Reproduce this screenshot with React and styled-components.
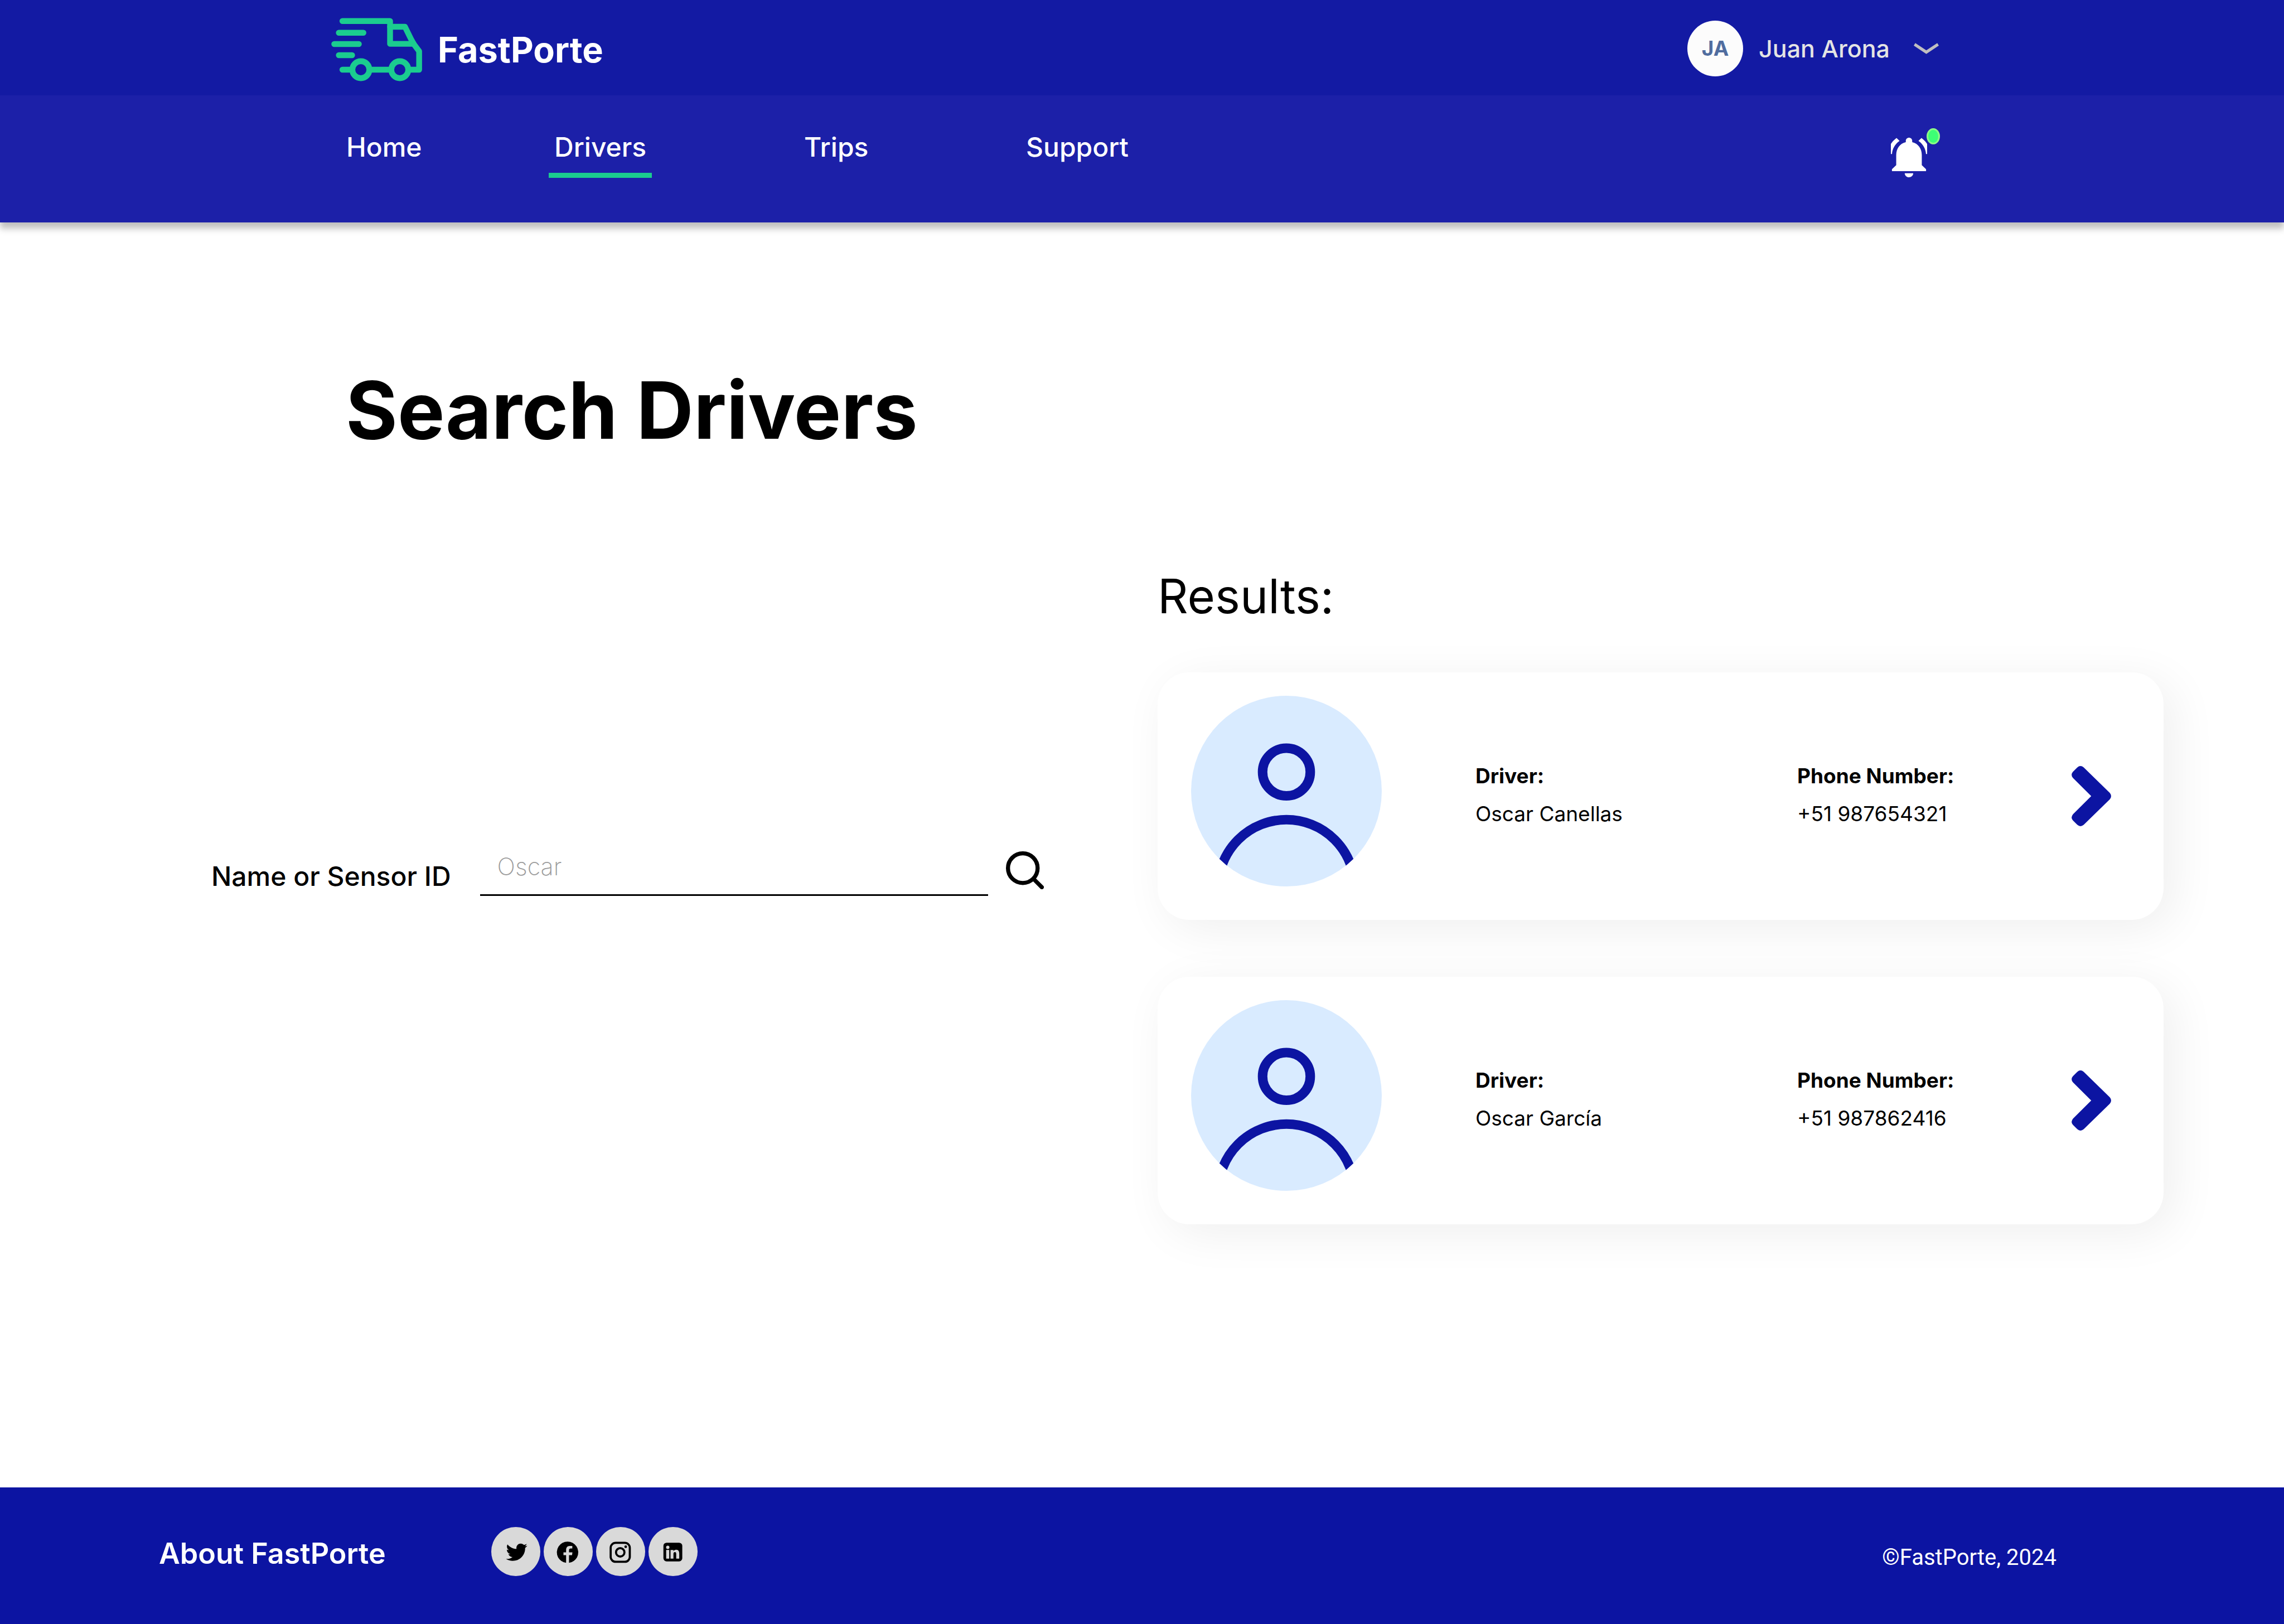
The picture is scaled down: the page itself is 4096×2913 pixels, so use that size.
import React, { useState } from "react";
import styled, { createGlobalStyle } from "styled-components";

const color = {
  brand: "#0c14a2",
  topBar: "#131aa3",
  navBar: "#1c20a8",
  accent: "#1bcc8f",
  page: "#ffffff",
};

const GlobalStyle = createGlobalStyle`
  *, *::before, *::after { box-sizing: border-box; }
  body {
    margin: 0;
    background: ${color.page};
    color: #000;
    font-family: Inter, "Liberation Sans", sans-serif;
  }
  button, input { font: inherit; color: inherit; }
  svg { display: block; }
`;

const Page = styled.div`
  display: flex;
  flex-direction: column;
  min-height: 100vh;
`;

const Header = styled.header`
  position: relative;
  box-shadow: 0 11px 11px rgba(0, 0, 0, 0.25);
`;

const TopBar = styled.div`
  display: flex;
  align-items: center;
  justify-content: space-between;
  height: 171px;
  padding: 3px 619px 0 594px;
  background: ${color.topBar};
`;

const Brand = styled.a`
  display: flex;
  align-items: center;
  gap: 27px;
  padding-top: 4px;
  color: #fff;
  font-size: 63px;
  font-weight: 700;
  line-height: 76px;
  text-decoration: none;
`;

const TruckIcon = styled.svg`
  width: 164px;
  height: 114px;
  fill: none;
  stroke: ${color.accent};
  stroke-width: 14.6;
  stroke-linecap: round;
  stroke-linejoin: round;
`;

const PlainButton = styled.button`
  display: flex;
  padding: 0;
  border: 0;
  background: none;
  cursor: pointer;
`;

const ProfileButton = styled(PlainButton)`
  align-items: center;
  color: #e4e4e4;
  font-size: 43px;
  font-weight: 500;
  line-height: 52px;
`;

const Initials = styled.span`
  display: grid;
  place-items: center;
  width: 100px;
  height: 100px;
  margin-right: 28px;
  border-radius: 50%;
  background: #fcfcfc;
  color: #506d9f;
  font-size: 37px;
  font-weight: 700;
`;

const DownIcon = styled.svg`
  width: 45px;
  height: 20px;
  margin-left: 43px;
  fill: #c0bfc0;
`;

const NavBar = styled.div`
  display: flex;
  align-items: flex-start;
  justify-content: space-between;
  padding: 64px 617px 80px 611px;
  background: ${color.navBar};
`;

const NavLinks = styled.nav`
  display: grid;
  grid-template-columns: 373px 448px 398px auto;
  justify-items: start;
`;

const NavLink = styled.a`
  padding: 0 10px 17px;
  border-bottom: 9px solid ${(p) => (p.$active ? color.accent : "transparent")};
  color: #fff;
  font-size: 48px;
  font-weight: 500;
  line-height: 58px;
  text-decoration: none;
`;

const BellButton = styled(PlainButton)`
  position: relative;
  align-items: flex-end;
  width: 88px;
  height: 88px;
  margin-top: -5px;
`;

const BellIcon = styled.svg`
  width: 65px;
  height: 71px;
  fill: #fff;
`;

const Badge = styled.span`
  position: absolute;
  top: 0;
  right: 0;
  width: 24px;
  height: 29px;
  border: 3px solid #8dff86;
  border-radius: 50%;
  background: #3dff75;
`;

const Main = styled.main`
  flex: 1;
  padding: 250px 216px 200px 379px;
`;

const Title = styled.h1`
  margin: 0 0 197px 241px;
  font-size: 142px;
  font-weight: 700;
  line-height: 172px;
`;

const Columns = styled.div`
  display: grid;
  grid-template-columns: minmax(0, 1493fr) minmax(0, 1804fr);
  gap: 204px;
`;

const SearchForm = styled.form`
  display: flex;
  align-items: flex-start;
  align-self: start;
  margin-top: 509px;
`;

const SearchLabel = styled.label`
  padding-top: 16px;
  margin-right: 52px;
  font-size: 48px;
  font-weight: 500;
  line-height: 58px;
  white-space: nowrap;
`;

const SearchInput = styled.input`
  flex: 1;
  min-width: 0;
  height: 80px;
  padding: 0 31px 24px;
  border: 0;
  border-bottom: 3px solid #000;
  border-radius: 0;
  outline: 0;
  background: transparent;
  font-size: 43px;
  font-weight: 200;
  line-height: 52px;

  &::placeholder {
    color: #9c9c9c;
    opacity: 1;
  }
`;

const SearchButton = styled(PlainButton)`
  margin-left: 32px;
`;

const SearchIcon = styled.svg`
  width: 68px;
  height: 68px;
  fill: none;
  stroke: #000;
  stroke-width: 31;
  stroke-linecap: round;
`;

const ResultsTitle = styled.h2`
  margin: 0 0 84px;
  font-size: 85px;
  font-weight: 400;
  line-height: 104px;
`;

const CardList = styled.div`
  display: grid;
  gap: 102px;
`;

const Card = styled.article`
  display: flex;
  align-items: center;
  padding: 42px 94px 42px 60px;
  border-radius: 57px;
  background: #fff;
  box-shadow: 18px 16px 84px rgba(0, 0, 0, 0.065);
`;

const Portrait = styled.svg`
  width: 342px;
  height: 342px;
  margin: 0 168px 18px 0;
  border-radius: 50%;
  background: #d9ebff;
  fill: none;
  stroke: ${color.brand};
  stroke-width: 6;
`;

const Details = styled.dl`
  display: grid;
  grid-template-columns: 577px auto;
  margin: 0;
  padding-bottom: 4px;
  font-size: 37px;
  line-height: 68px;
`;

const Term = styled.dt`
  font-weight: 700;
`;

const Value = styled.dd`
  margin: 0;
`;

const OpenButton = styled(PlainButton)`
  margin-left: auto;
`;

const NextIcon = styled.svg`
  width: 71px;
  height: 108px;
  fill: ${color.brand};
`;

const Footer = styled.footer`
  display: flex;
  align-items: center;
  height: 245px;
  padding: 0 408px 8px 285px;
  background: ${color.brand};
  color: #fff;
`;

const AboutLink = styled.a`
  margin-right: 189px;
  color: inherit;
  font-size: 52px;
  font-weight: 600;
  line-height: 62px;
  text-decoration: none;
`;

const SocialLinks = styled.div`
  display: flex;
  gap: 6px;
  margin-bottom: 7px;
`;

const SocialLink = styled.a`
  width: 88px;
  height: 88px;
  border-radius: 50%;
  background: #d9d9d9;
  color: #000;
`;

const Copyright = styled.small`
  margin: 14px 0 0 auto;
  font-family: Roboto, "Liberation Sans", sans-serif;
  font-size: 40px;
  line-height: 48px;
`;

const NAV = ["Home", "Drivers", "Trips", "Support"];

const DRIVERS = [
  { name: "Oscar Canellas", phone: "+51 987654321" },
  { name: "Oscar García", phone: "+51 987862416" },
];

function Truck() {
  return (
    <TruckIcon viewBox="835.5 46 230 160" aria-hidden="true">
      <path d="M863.5 54H983.5V111.5H1043" />
      <path d="M983.5 68.5H1021L1036.5 100L1043.5 112.5L1056.7 130V176.5H1033" />
      <path d="M854.5 83.5H916.5M843 112H905M854.5 140H888M863.5 176.5H885M934 176.5H984" />
      <circle cx="910" cy="176.5" r="21.4" />
      <circle cx="1008" cy="176.5" r="21.4" />
    </TruckIcon>
  );
}

const SOCIAL = [
  {
    name: "Twitter",
    box: "0 36 372 372",
    art: (
      <path
        transform="translate(112 146.5) scale(.315)"
        d="M459.37 151.716c.325 4.548.325 9.097.325 13.645 0 138.72-105.583 298.558-298.558 298.558-59.452 0-114.68-17.219-161.137-47.106 8.447.974 16.568 1.299 25.34 1.299 49.055 0 94.213-16.568 130.274-44.832-46.132-.975-84.792-31.188-98.112-72.772 6.498.974 12.995 1.624 19.818 1.624 9.421 0 18.843-1.3 27.614-3.573-48.081-9.747-84.143-51.98-84.143-102.985v-1.299c13.969 7.797 30.214 12.67 47.431 13.319-28.264-18.843-46.781-51.005-46.781-87.391 0-19.492 5.197-37.36 14.294-52.954 51.655 63.675 129.3 105.258 216.365 109.807-1.624-7.797-2.599-15.918-2.599-24.04 0-57.828 46.782-104.934 104.934-104.934 30.213 0 57.502 12.67 76.67 33.137 23.715-4.548 46.456-13.32 66.599-25.34-7.798 24.366-24.366 44.833-46.132 57.827 21.117-2.273 41.584-8.122 60.426-16.243-14.292 20.791-32.161 39.308-52.628 54.253z"
      />
    ),
  },
  {
    name: "Facebook",
    box: "394 36 372 372",
    art: (
      <path d="M564 308A81 81 0 1 1 586 308V249H609L612 228H586V212C586 203 591 199 600 199H611V180H593C574 180 564 191 564 210V228H544V249H564Z" />
    ),
  },
  {
    name: "Instagram",
    box: "789 36 372 372",
    art: (
      <>
        <rect x="899.5" y="156" width="145" height="144" rx="38" fill="none" stroke="currentColor" strokeWidth="16" />
        <circle cx="972" cy="228" r="32" fill="none" stroke="currentColor" strokeWidth="16" />
        <circle cx="1013.5" cy="186" r="10" />
      </>
    ),
  },
  {
    name: "LinkedIn",
    box: "1183 36 372 372",
    art: (
      <>
        <rect x="1296" y="155" width="143" height="142" rx="24" />
        <g fill="#d9d9d9">
          <circle cx="1329" cy="190" r="12.5" />
          <rect x="1317" y="210" width="23" height="66" />
          <path d="M1350 210H1372V219C1377 212 1384 208 1393 208C1410 208 1416 220 1416 239V276H1393V240C1393 231 1390 226 1383 226C1376 226 1372 231 1372 240V276H1350Z" />
        </g>
      </>
    ),
  },
];

function DriverCard({ driver }) {
  return (
    <Card>
      <Portrait viewBox="0 0 120 120" aria-hidden="true">
        <circle cx="60" cy="48" r="15" />
        <circle cx="60" cy="121" r="43" />
      </Portrait>
      <Details>
        <Term>Driver:</Term>
        <Term>Phone Number:</Term>
        <Value>{driver.name}</Value>
        <Value>{driver.phone}</Value>
      </Details>
      <OpenButton type="button" aria-label={`Open ${driver.name}`}>
        <NextIcon viewBox="72 66 300 456">
          <path d="M116 76Q139 56 164 76L362 270Q382 294 362 318L164 512Q139 532 116 512L82 478Q62 456 84 430L221 294L84 158Q62 132 82 110Z" />
        </NextIcon>
      </OpenButton>
    </Card>
  );
}

export default function App() {
  const [query, setQuery] = useState("");
  return (
    <Page>
      <GlobalStyle />
      <Header>
        <TopBar>
          <Brand href="#">
            <Truck />
            FastPorte
          </Brand>
          <ProfileButton type="button">
            <Initials>JA</Initials>
            Juan Arona
            <DownIcon viewBox="0 0 64 28" aria-hidden="true">
              <path d="M4 0L32 18.5L60 0L64 6.5L32 28L0 6.5Z" />
            </DownIcon>
          </ProfileButton>
        </TopBar>
        <NavBar>
          <NavLinks>
            {NAV.map((item) => (
              <NavLink key={item} href="#" $active={item === "Drivers"}>
                {item}
              </NavLink>
            ))}
          </NavLinks>
          <BellButton type="button" aria-label="Notifications">
            <BellIcon viewBox="3.5 2.5 17 19.5" preserveAspectRatio="none">
              <path d="M7.58 4.08L6.15 2.65C3.75 4.48 2.17 7.3 2.03 10.5h2c.15-2.65 1.51-4.97 3.55-6.42zm12.39 6.42h2c-.15-3.2-1.73-6.02-4.12-7.85l-1.42 1.43c2.02 1.45 3.39 3.77 3.54 6.42zM18 11c0-3.07-1.64-5.64-4.5-6.32V4c0-.83-.67-1.5-1.5-1.5s-1.5.67-1.5 1.5v.68C7.63 5.36 6 7.92 6 11v5l-2 2v1h16v-1l-2-2v-5zm-6 11c.14 0 .27-.01.4-.04.65-.14 1.18-.58 1.44-1.18.1-.24.15-.5.15-.78h-4c.01 1.1.9 2 2.01 2z" />
            </BellIcon>
            <Badge />
          </BellButton>
        </NavBar>
      </Header>
      <Main>
        <Title>Search Drivers</Title>
        <Columns>
          <SearchForm onSubmit={(e) => e.preventDefault()}>
            <SearchLabel htmlFor="query">Name or Sensor ID</SearchLabel>
            <SearchInput
              id="query"
              type="text"
              placeholder="Oscar"
              value={query}
              onChange={(e) => setQuery(e.target.value)}
            />
            <SearchButton type="submit" aria-label="Search">
              <SearchIcon viewBox="48 54 288 288">
                <circle cx="176" cy="182" r="112.5" />
                <path d="M265 271L320.5 326.5" />
              </SearchIcon>
            </SearchButton>
          </SearchForm>
          <section>
            <ResultsTitle>Results:</ResultsTitle>
            <CardList>
              {DRIVERS.map((driver) => (
                <DriverCard key={driver.name} driver={driver} />
              ))}
            </CardList>
          </section>
        </Columns>
      </Main>
      <Footer>
        <AboutLink href="#">About FastPorte</AboutLink>
        <SocialLinks>
          {SOCIAL.map((item) => (
            <SocialLink key={item.name} href="#" aria-label={item.name}>
              <svg viewBox={item.box} fill="currentColor" width="88" height="88">
                {item.art}
              </svg>
            </SocialLink>
          ))}
        </SocialLinks>
        <Copyright>©FastPorte, 2024</Copyright>
      </Footer>
    </Page>
  );
}
